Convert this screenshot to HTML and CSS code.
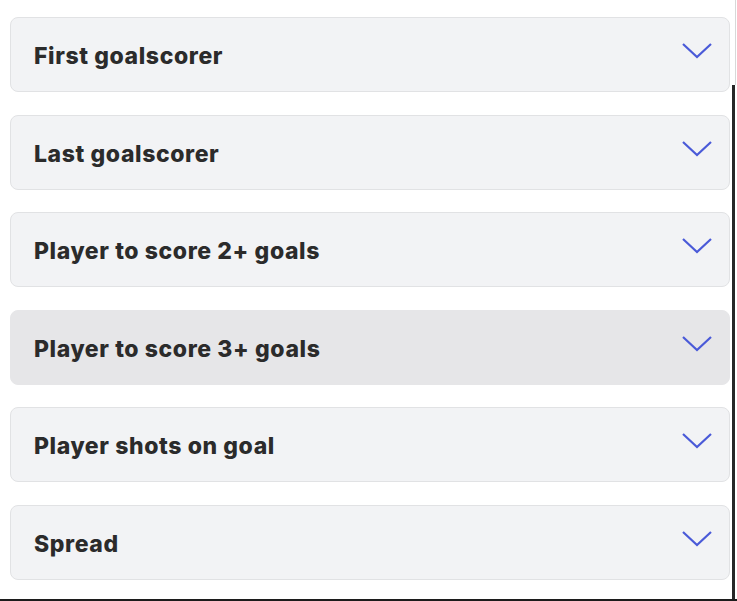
FILE: index.html
```html
<!DOCTYPE html>
<html lang="en">
<head>
    <meta charset="UTF-8">
    <meta name="viewport" content="width=device-width, initial-scale=1.0">
    <title>Player markets</title>
    <link rel="stylesheet" href="styles.css">
</head>
<body>

    <div id="markets">
        <div class="market">
            <span class="market-title">First goalscorer</span>
            <svg class="chevron" viewBox="0 0 30 16"><path d="M1 1 L15 14 L29 1"/></svg>
        </div>
        <div class="market">
            <span class="market-title">Last goalscorer</span>
            <svg class="chevron" viewBox="0 0 30 16"><path d="M1 1 L15 14 L29 1"/></svg>
        </div>
        <div class="market">
            <span class="market-title">Player to score 2+ goals</span>
            <svg class="chevron" viewBox="0 0 30 16"><path d="M1 1 L15 14 L29 1"/></svg>
        </div>
        <div class="market hover">
            <span class="market-title">Player to score 3+ goals</span>
            <svg class="chevron" viewBox="0 0 30 16"><path d="M1 1 L15 14 L29 1"/></svg>
        </div>
        <div class="market">
            <span class="market-title">Player shots on goal</span>
            <svg class="chevron" viewBox="0 0 30 16"><path d="M1 1 L15 14 L29 1"/></svg>
        </div>
        <div class="market">
            <span class="market-title">Spread</span>
            <svg class="chevron" viewBox="0 0 30 16"><path d="M1 1 L15 14 L29 1"/></svg>
        </div>
    </div>

    <!-- window edges from the capture -->
    <div class="edge-line"></div>
    <div class="scroll-thumb"></div>
    <div class="bottom-line"></div>

</body>
</html>
```

FILE: styles.css
```css
body {
    margin: 0;
    padding: 0;
    background: #fff;
    font-family: Inter, "Liberation Sans", Arial, sans-serif;
    overflow: hidden;
}

#markets {
    display: flex;
    flex-direction: column;
    gap: 22.6px;
    padding: 17px 0 0 10px;
    width: 720px;
}

.market {
    box-sizing: border-box;
    height: 75px;
    display: flex;
    justify-content: space-between;
    align-items: flex-start;
    padding: 0 17px 0 23px;
    background-color: #f2f3f5;
    border: 1px solid #e1e2e4;
    border-radius: 8px;
}

.market.hover {
    background-color: #e6e6e8;
    border-color: #e6e6e8;
}

.market-title {
    margin-top: 24px;
    font-size: 23px;
    font-weight: 800;
    letter-spacing: 0.6px;
    color: #2b2b2b;
}

.chevron {
    margin-top: 25px;
    width: 30px;
    height: 16px;
    fill: none;
    stroke: #4a5ad8;
    stroke-width: 2.2;
}

.edge-line {
    position: fixed;
    top: 0;
    right: 1px;
    width: 1px;
    height: 85px;
    background-color: #d8d8d8;
}

.scroll-thumb {
    position: fixed;
    top: 85px;
    right: 2px;
    width: 3px;
    bottom: 0;
    background-color: #262626;
}

.bottom-line {
    position: fixed;
    left: 0;
    right: 0;
    bottom: 0;
    height: 2px;
    background-color: #1c1c1c;
}
```
